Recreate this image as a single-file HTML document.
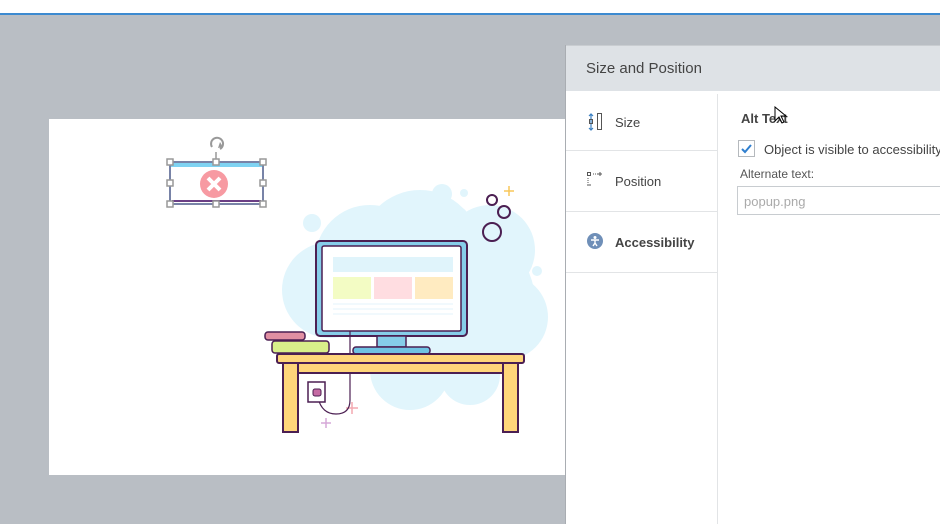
<!DOCTYPE html>
<html><head><meta charset="utf-8"><style>
body{margin:0;width:940px;height:524px;overflow:hidden;background:#b9bec4;font-family:"Liberation Sans",sans-serif;position:relative}
.abs{position:absolute}
</style></head><body>
<div class="abs" style="left:0;top:0;width:940px;height:13px;background:#fff"></div>
<div class="abs" style="left:0;top:13px;width:940px;height:2px;background:#3c8ad0"></div>
<div class="abs" style="left:49px;top:119px;width:516px;height:356px;background:#fff"></div>
<svg class="abs" style="left:0;top:0" width="940" height="524">
 <g fill="#e1f5fc">
  <circle cx="460" cy="302" r="75"/><circle cx="370" cy="260" r="55"/><circle cx="330" cy="290" r="48"/>
  <circle cx="420" cy="250" r="60"/><circle cx="490" cy="250" r="45"/><circle cx="505" cy="317" r="43"/>
  <circle cx="410" cy="370" r="40"/><circle cx="470" cy="375" r="30"/>
  <circle cx="312" cy="223" r="9"/><circle cx="442" cy="194" r="10"/><circle cx="458" cy="217" r="10"/>
  <circle cx="464" cy="193" r="4"/><circle cx="537" cy="271" r="5"/><circle cx="532" cy="257" r="2"/>
 </g>
 <g fill="none" stroke="#4b1f52" stroke-width="2">
  <circle cx="492" cy="200" r="5"/><circle cx="504" cy="212" r="6"/><circle cx="492" cy="232" r="9"/>
 </g>
 <path d="M509 186v10M504 191h10" stroke="#f8c75a" stroke-width="1.5"/>
 <path d="M352 402v12M346 408h12" stroke="#f4a9b0" stroke-width="1.5"/>
 <path d="M326 418v10M321 423h10" stroke="#d5a8d8" stroke-width="1.5"/>
 <rect x="316" y="241" width="151" height="95" rx="4" fill="#86cde9" stroke="#4b1f52" stroke-width="2"/>
 <rect x="322" y="246" width="139" height="85" rx="2" fill="#fff" stroke="#4b1f52" stroke-width="1.5"/>
 <rect x="333" y="257" width="120" height="15" fill="#e0f4fb"/>
 <rect x="333" y="277" width="38" height="22" fill="#f3fcc4"/>
 <rect x="374" y="277" width="38" height="22" fill="#ffdde1"/>
 <rect x="415" y="277" width="38" height="22" fill="#ffebc1"/>
 <g stroke="#e3f3fb" stroke-width="1"><path d="M333 304h120M333 309h120M333 314h120"/></g>
 <rect x="377" y="336" width="29" height="11" fill="#86cde9" stroke="#4b1f52" stroke-width="1.5"/>
 <rect x="353" y="347" width="77" height="7" rx="3" fill="#6fc3e3" stroke="#4b1f52" stroke-width="1.5"/>
 <path d="M350 331v69q0 14 -14 14q-14 0 -18 -16" fill="none" stroke="#4b1f52" stroke-width="1.2"/>
 <rect x="265" y="332" width="40" height="8" rx="3" fill="#e18fa2" stroke="#4b1f52" stroke-width="1.5"/>
 <rect x="272" y="341" width="57" height="12" rx="3" fill="#d9ef8a" stroke="#4b1f52" stroke-width="1.5"/>
 <rect x="277" y="354" width="247" height="9" rx="2" fill="#ffd57a" stroke="#4b1f52" stroke-width="2"/>
 <rect x="297" y="363" width="208" height="10" fill="#ffd57a" stroke="#4b1f52" stroke-width="2"/>
 <rect x="283" y="363" width="15" height="69" fill="#ffd57a" stroke="#4b1f52" stroke-width="2"/>
 <rect x="503" y="363" width="15" height="69" fill="#ffd57a" stroke="#4b1f52" stroke-width="2"/>
 <rect x="308" y="382" width="17" height="20" fill="#fff" stroke="#4b1f52" stroke-width="1.5"/>
 <rect x="313" y="389" width="8" height="7" rx="2" fill="#c56aa3" stroke="#4b1f52"/>
 <rect x="170" y="162" width="93" height="42" fill="#fff" stroke="#4b5a8a" stroke-width="1.5"/>
 <rect x="171" y="163" width="91" height="4" fill="#7fd3f2"/>
 <rect x="172" y="200" width="89" height="2" fill="#6b3f85"/>
 <circle cx="214" cy="184" r="14" fill="#f79aa2"/>
 <path d="M208 178l12 12M220 178l-12 12" stroke="#fff" stroke-width="4"/>
 <path d="M216 160v-8" stroke="#999" stroke-width="1.5"/>
 <path d="M212 147a6 6 0 1 1 8 2" fill="none" stroke="#999" stroke-width="2"/>
 <path d="M220 142l3 5-5 1z" fill="#999"/>
 <g fill="#fff" stroke="#999" stroke-width="1.5">
  <rect x="167" y="159" width="6" height="6"/><rect x="213" y="159" width="6" height="6"/><rect x="260" y="159" width="6" height="6"/>
  <rect x="167" y="180" width="6" height="6"/><rect x="260" y="180" width="6" height="6"/>
  <rect x="167" y="201" width="6" height="6"/><rect x="213" y="201" width="6" height="6"/><rect x="260" y="201" width="6" height="6"/>
 </g>
</svg>
<div class="abs" style="left:565px;top:45px;width:375px;height:479px;background:#fff;border-left:1px solid #a9adb2;box-sizing:border-box"></div>
<div class="abs" style="left:566px;top:45px;width:374px;height:46px;background:#dee2e6;border-top:1px solid #c9cdd1;box-sizing:border-box;font-size:15px;color:#444;padding:14px 0 0 20px">Size and Position</div>
<div class="abs" style="left:717px;top:94px;width:1px;height:430px;background:#e2e4e6"></div>
<div class="abs" style="left:566px;top:150px;width:152px;height:1px;background:#e2e4e6"></div>
<div class="abs" style="left:566px;top:211px;width:152px;height:1px;background:#e2e4e6"></div>
<div class="abs" style="left:566px;top:272px;width:152px;height:1px;background:#e2e4e6"></div>
<div class="abs" style="left:615px;top:115px;font-size:13px;color:#444">Size</div>
<div class="abs" style="left:615px;top:174px;font-size:13px;color:#444">Position</div>
<div class="abs" style="left:615px;top:235px;font-size:13px;color:#444;font-weight:bold">Accessibility</div>
<svg class="abs" style="left:586px;top:112px" width="22" height="20"><path d="M5 2v16M3 4l2-2 2 2M3 16l2 2 2-2" stroke="#3a7fc1" fill="none" stroke-width="1.2"/><rect x="3.5" y="7.5" width="3" height="4" fill="none" stroke="#555"/><rect x="11.5" y="1.5" width="4" height="16" fill="none" stroke="#555"/></svg>
<svg class="abs" style="left:587px;top:172px" width="20" height="16"><rect x="0.5" y="0.5" width="3" height="3" fill="none" stroke="#555"/><path d="M6 2h6M1 6v6" stroke="#555" stroke-dasharray="1 1"/><path d="M13 0v4M11 2h4M0 13h4" stroke="#555"/></svg>
<svg class="abs" style="left:587px;top:233px" width="18" height="18"><circle cx="8" cy="8" r="8" fill="#6f8fb8"/><circle cx="8" cy="4.5" r="1.5" fill="#fff"/><path d="M4 7h8M8 7v3l-2 3M8 10l2 3" stroke="#fff" stroke-width="1.4" fill="none"/></svg>
<div class="abs" style="left:741px;top:111px;font-size:13px;color:#444;font-weight:bold">Alt Text</div>
<div class="abs" style="left:738px;top:140px;width:17px;height:17px;border:1px solid #b5b9bd;box-sizing:border-box"></div>
<svg class="abs" style="left:739px;top:141px" width="15" height="15"><path d="M3 8l3 3 6-7" stroke="#2f7fcf" stroke-width="2" fill="none"/></svg>
<div class="abs" style="left:764px;top:142px;font-size:13px;color:#444;white-space:nowrap">Object is visible to accessibility</div>
<div class="abs" style="left:740px;top:167px;font-size:12px;color:#555">Alternate text:</div>
<div class="abs" style="left:737px;top:186px;width:210px;height:29px;border:1px solid #c8ccd0;box-sizing:border-box;font-size:13px;color:#aaa;padding:7px 0 0 6px">popup.png</div>
<svg class="abs" style="left:774px;top:106px" width="14" height="20"><path d="M1 1v14l4-4 3 6 2-1-3-6h5z" fill="#fff" stroke="#000"/></svg>
</body></html>
